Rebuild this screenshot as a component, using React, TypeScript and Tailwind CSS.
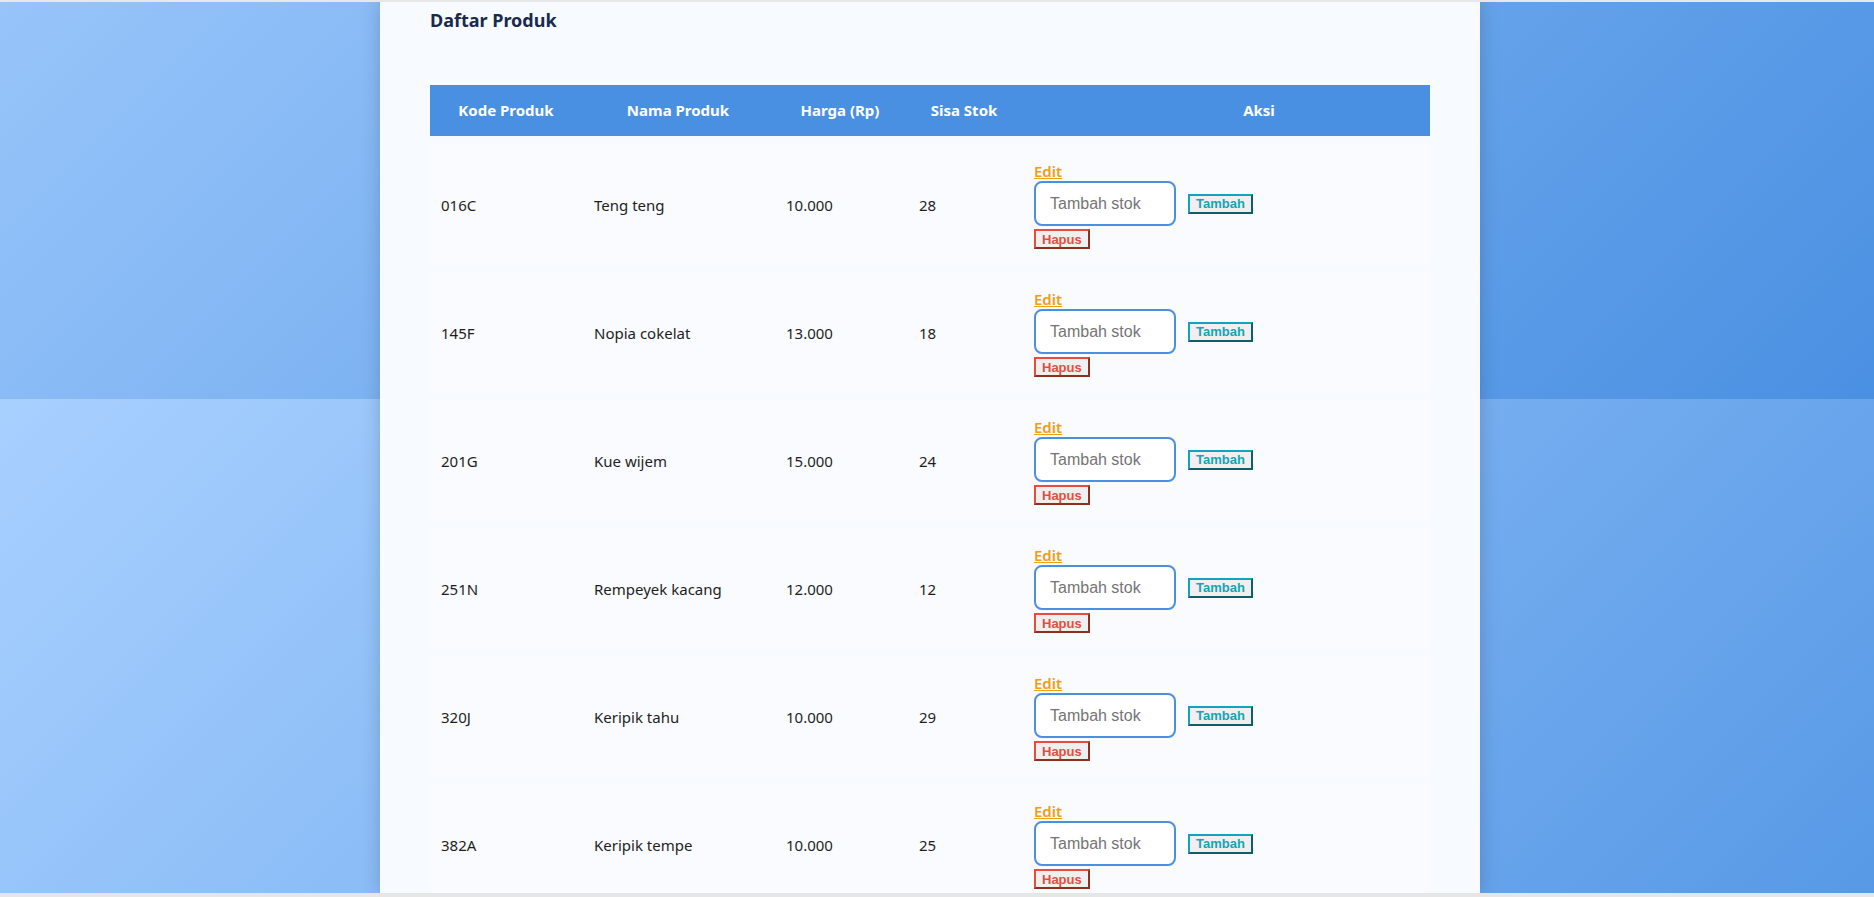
import { FC } from 'react';

// ~ ~ ~ ~ ~ ~ ~ ~ ~ ~ ~ ~ ~ ~ ~ ~ ~ ~ ~ ~ ~ ~ Data

interface IProduk {
  kode: string;
  nama: string;
  harga: string;
  stok: number;
}

const produkList: IProduk[] = [
  { kode: '016C', nama: 'Teng teng', harga: '10.000', stok: 28 },
  { kode: '145F', nama: 'Nopia cokelat', harga: '13.000', stok: 18 },
  { kode: '201G', nama: 'Kue wijem', harga: '15.000', stok: 24 },
  { kode: '251N', nama: 'Rempeyek kacang', harga: '12.000', stok: 12 },
  { kode: '320J', nama: 'Keripik tahu', harga: '10.000', stok: 29 },
  { kode: '382A', nama: 'Keripik tempe', harga: '10.000', stok: 25 },
];

const cols = 'grid grid-cols-[152px_192px_132px_116px_1fr]';

// ~ ~ ~ ~ ~ ~ ~ ~ ~ ~ ~ ~ ~ ~ ~ ~ ~ ~ ~ ~ ~ ~ Row

const RowProduk: FC<{ item: IProduk }> = ({ item }) => (
  <div className={`${cols} items-center h-[120px] mt-[8px] pt-[3px] bg-[#f9fbff] text-[15px] text-[#1e1e1e]`}>
    <div className="pl-[11px]">{item.kode}</div>
    <div className="pl-[12px]">{item.nama}</div>
    <div className="pl-[12px]">{item.harga}</div>
    <div className="pl-[13px]">{item.stok}</div>
    <div className="pl-[12px] flex flex-col items-start">
      <a href="#" className="text-[15px] leading-[18px] font-semibold text-[#f39c12] underline mb-[1px]">
        Edit
      </a>
      <div className="flex items-center gap-[12px] font-['Liberation_Sans',Arial,sans-serif]">
        <input
          type="number"
          placeholder="Tambah stok"
          className="w-[142px] h-[45px] px-[14px] text-[16px] bg-white border-2 border-[#4a90e2] rounded-[8px] outline-none placeholder:text-[#757575]"
        />
        <button className="h-[20px] px-[6px] text-[13px] leading-[15px] font-bold text-[#17a2b8] bg-[#efefef] border-2 border-t-[#17a2b8] border-l-[#17a2b8] border-b-[#0e5f6a] border-r-[#0e5f6a]">
          Tambah
        </button>
      </div>
      <button className="mt-[3px] h-[20px] px-[6px] text-[13px] leading-[15px] font-bold text-[#e74c3c] bg-[#efefef] border-2 border-t-[#e74c3c] border-l-[#e74c3c] border-b-[#922d23] border-r-[#922d23] font-['Liberation_Sans',Arial,sans-serif]">
        Hapus
      </button>
    </div>
  </div>
);

// ~ ~ ~ ~ ~ ~ ~ ~ ~ ~ ~ ~ ~ ~ ~ ~ ~ ~ ~ ~ ~ ~ Page

export const App: FC = () => {
  return (
    <div className="h-[897px] w-full overflow-hidden flex flex-col font-['Noto_Sans',sans-serif]">
      <div className="h-[2px] bg-[#e8e8e8]" />

      <div className="flex-1 flex justify-center pr-[14px] overflow-hidden bg-[linear-gradient(135deg,#a8d0ff,#4a90e2)] bg-[length:100%_897px] bg-[position:0_397px]">
        <main className="w-[1100px] shrink-0 h-full bg-[#f7faff] shadow-[0_0_18px_rgba(0,0,0,0.18)]">
          <h2 className="pl-[50px] pt-[5px] text-[18px] leading-[26px] font-bold text-[#1a2a4a]">
            Daftar Produk
          </h2>

          <section className="mx-[50px] mt-[52px]">
            <div className={`${cols} items-center h-[51px] bg-[#4a90e2] text-white text-[15px] font-bold`}>
              <div className="text-center whitespace-nowrap">Kode Produk</div>
              <div className="text-center whitespace-nowrap">Nama Produk</div>
              <div className="text-center whitespace-nowrap">Harga (Rp)</div>
              <div className="text-center whitespace-nowrap">Sisa Stok</div>
              <div className="text-center pl-[66px]">Aksi</div>
            </div>

            {produkList.map(item => (
              <RowProduk key={item.kode} item={item} />
            ))}
          </section>
        </main>
      </div>

      <div className="h-[4px] bg-[#e6e6e6]" />
    </div>
  );
};

// ~ ~ ~ ~ ~ ~ ~ ~ ~ ~ ~ ~ ~ ~ ~ ~ ~ ~ ~ ~ ~ ~ Export

export default App;
